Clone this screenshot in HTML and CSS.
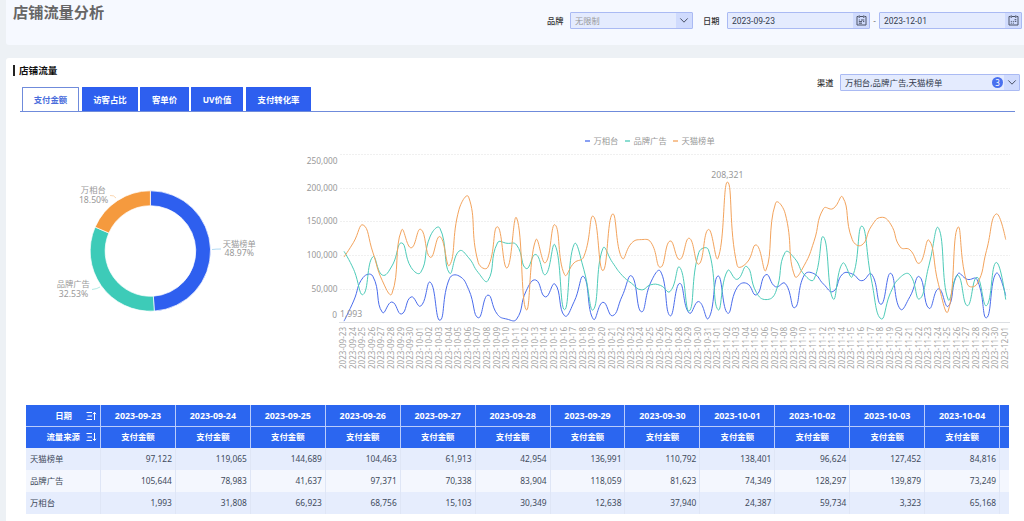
FILE: index.html
```html
<!DOCTYPE html>
<html lang="zh-CN">
<head>
<meta charset="utf-8">
<title>店铺流量分析</title>
<link rel="stylesheet" href="styles.css">
</head>
<body>
<div class="page">
  <header class="top">
    <h1 class="title">店铺流量分析</h1>
    <div class="filters">
      <span class="label">品牌</span>
      <div class="field brand">
        <span class="value placeholder">无限制</span>
        <span class="addon"><svg width="10" height="7" viewBox="0 0 10 7"><path d="M1.3 1.4 L5 5.2 L8.7 1.4"/></svg></span>
      </div>
      <span class="label date-label">日期</span>
      <div class="field date">
        <span class="value">2023-09-23</span>
        <span class="addon"><svg width="11" height="11" viewBox="0 0 11 11"><path d="M2.5 1.5H1V10H10V1.5H8.5M4 1.5H7M3.2 .3V3M7.8 .3V3M2.8 5H3.8M5 5H8.3M2.8 6.6H6M7 6.6H8.3M2.8 8.2H6"/></svg></span>
      </div>
      <span class="dash">-</span>
      <div class="field date">
        <span class="value">2023-12-01</span>
        <span class="addon"><svg width="11" height="11" viewBox="0 0 11 11"><path d="M2.5 1.5H1V10H10V1.5H8.5M4 1.5H7M3.2 .3V3M7.8 .3V3M6.6 4.7H8.3M2.8 6.4H3.8M4.8 6.4H5.8M6.8 6.4H8.3M2.8 8.2H3.8M4.8 8.2H5.8"/></svg></span>
      </div>
    </div>
  </header>

  <main class="card">
    <div class="card-head">
      <h2 class="subtitle">店铺流量</h2>
      <div class="channel-row">
        <span class="label">渠道</span>
        <div class="field channel">
          <span class="value">万相台,品牌广告,天猫榜单</span>
          <span class="count">3</span>
          <span class="addon"><svg width="10" height="7" viewBox="0 0 10 7"><path d="M1.3 1.4 L5 5.2 L8.7 1.4"/></svg></span>
        </div>
      </div>
    </div>
    <nav class="tabs">
      <span class="tab active t1">支付金额</span>
      <span class="tab t2">访客占比</span>
      <span class="tab t3">客单价</span>
      <span class="tab t4">UV价值</span>
      <span class="tab t5">支付转化率</span>
    </nav>
    <div class="charts">
      <svg class="donut" id="donut" width="294" height="289" viewBox="6 111 294 289"></svg>
      <svg class="lines" id="lines" width="724" height="289" viewBox="300 111 724 289"></svg>
    </div>
    <div class="table-wrap"><table class="grid" id="grid"></table></div>
  </main>
</div>
<script src="app.js"></script>
</body>
</html>
```

FILE: styles.css
```css
* { box-sizing: border-box; }

body {
  margin: 0;
  background: #edf1f5;
  color: #333;
  font: 8.2px/1.2 "Noto Sans", "Noto Sans CJK SC", sans-serif;
}

.page {
  height: 521px;
  padding-left: 6px;
  display: flex;
  flex-direction: column;
  gap: 13px;
  overflow: hidden;
}

.top {
  height: 45px;
  flex: none;
  display: flex;
  justify-content: space-between;
  padding: 0 2px 0 7px;
  background: #f6f9ff;
  border-radius: 0 0 0 3px;
}

.title {
  margin: 1px 0 0;
  font-size: 15.2px;
  line-height: 22px;
  font-weight: 700;
  color: #666;
}

.filters {
  display: flex;
  align-items: center;
  height: 17px;
  margin-top: 12px;
}

.label {
  width: 23px;
  color: #333;
  font-weight: 500;
  white-space: nowrap;
}

.date-label { width: 24px; margin-left: 10px; }
.dash { width: 9px; text-align: center; color: #777; }

.field {
  display: flex;
  align-items: stretch;
  height: 17px;
  border: 1px solid #aabaf3;
  border-radius: 1px;
  background: #e4ebfe;
  overflow: hidden;
}

.brand { width: 123px; }
.date { width: 143px; }
.channel { width: 180px; align-items: center; }

.value {
  flex: 1;
  padding-left: 4px;
  line-height: 15px;
  color: #333b4d;
  white-space: nowrap;
}

.date .value { padding-top: 1px; font-family: Roboto, sans-serif; font-size: 8.5px; }
.channel .value { font-size: 8.45px; }
.value.placeholder { color: #999; }

.addon {
  width: 16px;
  height: 15px;
  display: flex;
  align-items: center;
  justify-content: center;
  background: #d0dbfd;
}

.addon svg { fill: none; stroke: #4a5266; stroke-width: 1; }

.count {
  width: 11px;
  height: 11px;
  margin-right: 0;
  border-radius: 50%;
  background: #4970ef;
  color: #fff;
  font-size: 8px;
  line-height: 11px;
  text-align: center;
}

.channel .addon { width: 15px; }
.channel .count { margin-right: 1px; }

.card {
  flex: 1;
  background: #fff;
  border-radius: 3px 0 0 0;
}

.card-head {
  height: 29px;
  display: flex;
  justify-content: space-between;
  padding: 0 4px 0 7px;
}

.subtitle {
  height: 11px;
  margin: 7px 0 0;
  padding-left: 4px;
  border-left: 2px solid #222;
  font-size: 9.6px;
  line-height: 12px;
  font-weight: 700;
  color: #111;
}

.channel-row { display: flex; align-items: center; height: 17px; margin-top: 16px; }

.tabs {
  display: flex;
  height: 25px;
  margin: 0 9px 0 14px;
  padding-left: 2px;
  border-bottom: 1px solid #6f8bdb;
}

.tab {
  height: 24px;
  margin-right: 2px;
  border: 1px solid #2c5df0;
  border-bottom: 0;
  border-radius: 1px 1px 0 0;
  background: #2e5fef;
  color: #fff;
  font-size: 8.4px;
  line-height: 24px;
  font-weight: 700;
  text-align: center;
}

.tab.active { background: #fff; color: #4a6ddc; border-color: #6f8bdb; }
.t1 { width: 57px; margin-right: 3px; }
.t2 { width: 56px; }
.t3 { width: 49px; }
.t4 { width: 52px; margin-right: 3px; }
.t5 { width: 65px; }

.charts { display: flex; height: 289px; margin-top: -1px; }
.charts svg { display: block; flex: none; }
.charts text { fill: #999; font-size: 8.3px; }
.charts .num { font-size: 8.7px; }
.charts .axis { font-size: 8px; fill: #a3a3a3; }
.gridline { stroke: #f0f0f0; stroke-width: 1; stroke-dasharray: 2 1; }
.baseline { stroke: #dcdfe3; stroke-width: 1; }
.series { fill: none; stroke-width: 1; }
.leader { fill: none; stroke-width: .8; opacity: .5; }

.table-wrap { width: 983px; margin: 5px 0 0 20px; overflow: hidden; }

.grid {
  width: 1049px;
  table-layout: fixed;
  border-collapse: separate;
  border-spacing: 0;
  font-size: 8.4px;
}

.grid .first { width: 75px; }
.grid th, .grid td { height: 22px; padding: 0 3px; white-space: nowrap; line-height: 12px; }
.grid tr:nth-child(2) th { height: 21px; padding-bottom: 1px; }
.grid th {
  background: #2b66f0;
  color: #fff;
  font-weight: 700;
  text-align: center;
  border-right: 1px solid #b9ccfb;
}
.grid thead tr:first-child th { border-bottom: 1px solid #b9ccfb; }
.grid thead tr:first-child th:not(.first) { font-size: 8.9px; }
.grid td { color: #414b5c; text-align: right; background: #e6edfd; border-right: 1px solid #dfe6f6; }
.grid tbody tr:nth-child(2) td { background: #f4f7fe; }
.grid td:first-child { text-align: left; padding-left: 4px; }
.corner { display: flex; align-items: center; justify-content: flex-end; gap: 14px; }
.corner.tight { gap: 6px; }
.corner svg { fill: none; stroke: #fff; stroke-width: 1; }
```

FILE: app.js
```js
const BLUE = '#2e5fef', TEAL = '#3dcbb8', ORANGE = '#f59a3e';

const data = {
  '万相台': [1993,31808,66923,68756,15103,30349,12638,37940,24387,59734,3323,65168,69000,49000,7000,40600,12000,5000,5000,47000,63000,38000,57000,10000,31000,68000,5000,30000,10000,39000,69000,16000,60000,76000,10000,58000,14000,31000,6000,69000,14000,52000,58000,41000,71000,53000,58000,22000,70500,72500,57000,46000,72000,72000,62000,72000,27000,73000,20000,38000,68000,21000,50000,24000,72000,64000,64000,7000,73000,40000],
  '品牌广告': [105644,78983,41637,97371,70338,83904,118059,81623,74349,128297,139879,73249,106000,96000,74000,62000,118000,117500,115000,80000,101000,71000,115000,19000,116000,79000,19000,110000,89000,70000,58000,48500,56000,55000,46000,82000,17000,104000,108000,19000,77000,64000,83000,44600,34000,44600,104000,95000,71000,64000,127000,35000,88000,68000,143000,63000,5500,44600,67000,71000,35000,85000,140000,34000,70000,25000,67000,25000,89000,34000],
  '天猫榜单': [97122,119065,144689,104463,61913,42954,136991,110792,138401,96624,127452,84816,168000,186000,89000,82000,142000,81000,155000,19000,122500,88600,145000,71000,88600,97500,157500,77000,161000,95500,118000,123000,119000,82000,121000,93500,125000,86600,138000,95500,208321,84600,88600,115000,77700,177000,162000,69000,85000,120000,169000,169000,186000,123000,115000,143000,156000,146000,112000,108000,88000,122000,56000,17000,141000,57000,57000,107000,161000,123000]
};
const colors = { '万相台': '#4a6cec', '品牌广告': '#4dcbb8', '天猫榜单': '#f3a35c' };

const dates = [];
for (let d = Date.UTC(2023, 8, 23); dates.length < 70; d += 864e5) {
  dates.push(new Date(d).toISOString().slice(0, 10));
}

const px = i => 344 + i * 9.59;
const py = v => 322.5 - v * 0.000674;

// Smooth curve: tangents follow the neighbouring points, scaled by segment length.
function curve(values) {
  const p = values.map((v, i) => [px(i), py(v)]);
  const dist = (a, b) => Math.hypot(a[0] - b[0], a[1] - b[1]);
  const handles = p.map((q, i) => {
    if (!i || i === p.length - 1) return [q, q];
    const a = p[i - 1], b = p[i + 1];
    const r = dist(q, b) / (dist(q, b) + dist(q, a));
    const vx = (b[0] - a[0]) / 2, vy = (b[1] - a[1]) / 2;
    return [[q[0] - vx * (1 - r), q[1] - vy * (1 - r)], [q[0] + vx * r, q[1] + vy * r]];
  });
  const f = q => q[0].toFixed(2) + ' ' + q[1].toFixed(2);
  return p.reduce((s, q, i) => i ? s + `C${f(handles[i - 1][1])} ${f(handles[i][0])} ${f(q)}` : 'M' + f(q), '');
}

let s = '';
for (let k = 1; k <= 5; k++) {
  const y = Math.round(py(k * 50000)) + .5;
  s += `<path class="gridline" d="M340 ${y}H1010"/>`;
  s += `<text text-anchor="end" x="337.5" y="${k === 5 ? 164 : y + 2.5}">${k * 50},000</text>`;
}
s += '<text text-anchor="end" x="337" y="318">0</text><path class="baseline" d="M339 322.5H1010"/>';
dates.forEach((d, i) => {
  s += `<text class="axis" transform="translate(${(px(i) + 2.1).toFixed(2)} 369) rotate(-90)" textLength="42">${d}</text>`;
});
for (const name in data) s += `<path class="series" stroke="${colors[name]}" d="${curve(data[name])}"/>`;
s += '<text class="num" x="340" y="317">1,993</text><text class="num" text-anchor="middle" x="727.3" y="177.5">208,321</text>';
[['万相台', 585], ['品牌广告', 625], ['天猫榜单', 673]].forEach(([n, x]) => {
  s += `<path d="M${x} 141H${x + 5}" stroke="${colors[n]}" stroke-width="1.3"/><text x="${x + 8.5}" y="144">${n}</text>`;
});
document.getElementById('lines').innerHTML = s;

const cx = 150.4, cy = 251, R = 60.2, r = 45.3;
const at = (rad, t) => `${(cx + rad * Math.sin(t * 2 * Math.PI)).toFixed(2)} ${(cy - rad * Math.cos(t * 2 * Math.PI)).toFixed(2)}`;
const slice = (a, b, c) => `<path fill="${c}" stroke="#fff" stroke-width=".7" d="M${at(R, a)}A${R} ${R} 0 0 1 ${at(R, b)}L${at(r, b)}A${r} ${r} 0 0 0 ${at(r, a)}Z"/>`;
document.getElementById('donut').innerHTML =
  slice(0, .4897, BLUE) + slice(.4897, .815, TEAL) + slice(.815, 1, ORANGE) +
  `<path class="leader" stroke="#3a9fe0" d="M212 249.5Q216 249 221 249"/>` +
  `<path class="leader" stroke="${TEAL}" d="M100 287Q97 289 92 289.5"/>` +
  `<path class="leader" stroke="${ORANGE}" d="M116 198Q114 195 110 195.5"/>` +
  `<g text-anchor="middle"><text x="239.3" y="246.5">天猫榜单</text><text class="num" x="239.3" y="256">48.97%</text>
  <text x="93.3" y="193">万相台</text><text class="num" x="93.6" y="203">18.50%</text>
  <text x="73.3" y="287">品牌广告</text><text class="num" x="73.5" y="296.5">32.53%</text></g>`;

const n = 13;
const sort = p => `<svg width="11" height="10" viewBox="0 0 11 10"><path d="M.5 1.5H6M1.5 5H6M.5 8.5H6${p}"/></svg>`;
const num = v => v.toLocaleString('en-US');
let t = `<thead><tr><th class="first"><div class="corner">日期${sort('M8.5 9V1.5M7 3.2L8.5 1.4L10 3.2')}</div></th>`;
for (let i = 0; i < n; i++) t += `<th>${i < 12 ? dates[i] : ''}</th>`;
t += `</tr><tr><th><div class="corner tight">流量来源${sort('M8.5 1V8.5M7 6.8L8.5 8.6L10 6.8')}</div></th>`;
for (let i = 0; i < n; i++) t += `<th>${i < 12 ? '支付金额' : ''}</th>`;
t += '</tr></thead><tbody>';
['天猫榜单', '品牌广告', '万相台'].forEach(name => {
  t += `<tr><td>${name}</td>`;
  for (let i = 0; i < n; i++) t += `<td>${i < 12 ? num(data[name][i]) : ''}</td>`;
  t += '</tr>';
});
document.getElementById('grid').innerHTML = t + '</tbody>';
```
